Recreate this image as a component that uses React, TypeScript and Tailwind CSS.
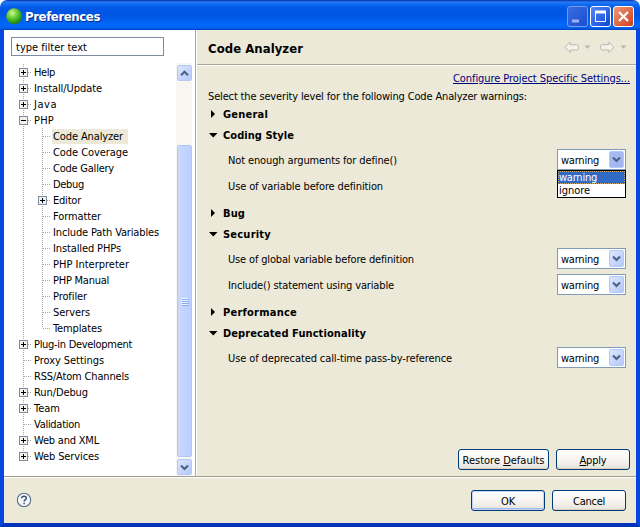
import React, { useLayoutEffect, useRef, useState } from 'react';

const FONT = "font-['DejaVu_Sans_Condensed','DejaVu_Sans',sans-serif] [font-stretch:condensed]";

/** A text label whose tracking is adjusted so that it fills the given width. */
function Label({ text, w, className = '', children }: { text: string; w: number; className?: string; children?: React.ReactNode }) {
  const ref = useRef<HTMLSpanElement>(null);
  const [spacing, setSpacing] = useState(0);
  useLayoutEffect(() => {
    if (ref.current) setSpacing((w - ref.current.getBoundingClientRect().width) / text.length);
  }, [text, w]);
  return (
    <span ref={ref} className={`inline-block shrink-0 whitespace-pre ${className}`} style={{ letterSpacing: spacing }}>
      {children ?? text}
    </span>
  );
}

type Node = { t: string; w: number; child?: boolean; box?: '+' | '-'; selected?: boolean };
const tree: Node[] = [
  { t: 'Help', w: 21, box: '+' },
  { t: 'Install/Update', w: 68, box: '+' },
  { t: 'Java', w: 23, box: '+' },
  { t: 'PHP', w: 20, box: '-' },
  { t: 'Code Analyzer', w: 70, child: true, selected: true },
  { t: 'Code Coverage', w: 75, child: true },
  { t: 'Code Gallery', w: 61, child: true },
  { t: 'Debug', w: 31, child: true },
  { t: 'Editor', w: 28, child: true, box: '+' },
  { t: 'Formatter', w: 48, child: true },
  { t: 'Include Path Variables', w: 106, child: true },
  { t: 'Installed PHPs', w: 68, child: true },
  { t: 'PHP Interpreter', w: 76, child: true },
  { t: 'PHP Manual', w: 56, child: true },
  { t: 'Profiler', w: 34, child: true },
  { t: 'Servers', w: 37, child: true },
  { t: 'Templates', w: 49, child: true },
  { t: 'Plug-in Development', w: 98, box: '+' },
  { t: 'Proxy Settings', w: 70 },
  { t: 'RSS/Atom Channels', w: 95 },
  { t: 'Run/Debug', w: 54, box: '+' },
  { t: 'Team', w: 26, box: '+' },
  { t: 'Validation', w: 46 },
  { t: 'Web and XML', w: 65, box: '+' },
  { t: 'Web Services', w: 65, box: '+' },
];

function Branch({ box, last, through }: { box?: '+' | '-'; last?: boolean; through?: boolean }) {
  return (
    <svg width="19" height="16" className="shrink-0" shapeRendering="crispEdges">
      <path d={`M4.5 0V${last ? 8 : 16}`} stroke="#a5a5a5" strokeDasharray="1 1" />
      {!through && <path d="M5 8.5H13" stroke="#a5a5a5" strokeDasharray="1 1" />}
      {box && (
        <>
          <rect x="0.5" y="4.5" width="8" height="8" fill="#f3f1ec" stroke="#7b8da3" />
          <path d="M2 8.5H7" stroke="#000" />
          {box === '+' && <path d="M4.5 6V11" stroke="#000" />}
        </>
      )}
    </svg>
  );
}

function TreeRow({ n, last, lastChild }: { n: Node; last: boolean; lastChild: boolean }) {
  return (
    <div className="flex h-4 items-center pl-[15px]">
      {n.child && <Branch through />}
      <Branch box={n.box} last={last || lastChild} />
      <div className={`-ml-[5px] flex h-[15px] items-center pl-px pr-[5px] ${n.selected ? 'bg-[#ece9d8]' : ''}`}>
        <Label text={n.t} w={n.w} />
      </div>
    </div>
  );
}

function Chevron({ up }: { up?: boolean }) {
  return (
    <svg width="9" height="7" viewBox="0 0 9 7">
      <path d={up ? 'M1 5.3L4.5 1.8L8 5.3' : 'M1 1.5L4.5 5L8 1.5'} fill="none" stroke="#4d6185" strokeWidth="2.1" />
    </svg>
  );
}

const blueBtn = 'flex items-center justify-center rounded-[2px] border border-[#b4c8f6] bg-linear-to-br from-[#dce6ff] to-[#b5c8f8]';

function Combo({ active }: { active?: boolean }) {
  return (
    <div className="flex h-[21px] w-[69px] items-center justify-between border border-[#7f9db9] bg-white pl-[3px] pr-px">
      <Label text="warning" w={38} className="mt-px" />
      <div className={`flex h-[17px] w-[15px] items-center justify-center rounded-[2px] border border-[#b4c8f6] bg-linear-to-br ${active ? 'from-[#a9bdf4] to-[#9fb3ef]' : 'from-[#dce6ff] to-[#b5c8f8]'}`}>
        <Chevron />
      </div>
    </div>
  );
}

function Section({ t, w, rows }: { t: string; w: number; rows?: { t: string; w: number; open?: boolean; bare?: boolean }[] }) {
  return (
    <div className="mb-px">
      <div className="flex h-5 items-center">
        <svg width="15" height="10" className="shrink-0">
          {rows ? <path d="M1 3H9.5L5.25 7.4Z" /> : <path d="M3 1V9L7 5Z" />}
        </svg>
        <Label text={t} w={w} className="font-bold" />
      </div>
      {rows && (
        <div className="pt-[2px] pb-[3px]">
          {rows.map((r) => (
            <div key={r.t} className="flex h-[26px] items-center justify-between pl-5 pr-[5px]">
              <Label text={r.t} w={r.w} />
              {!r.bare && (
                <div className="relative mb-px">
                  <Combo active={r.open} />
                  {r.open && (
                    <div className="absolute left-0 top-[21px] z-10 w-[69px] border border-black bg-white">
                      <div className="flex h-[13px] items-center bg-[#316ac5] pl-px text-white outline-1 -outline-offset-1 outline-dotted outline-[#c9a86a]">
                        <Label text="warning" w={38} />
                      </div>
                      <div className="flex h-[13px] items-center pl-px">
                        <Label text="ignore" w={31} />
                      </div>
                    </div>
                  )}
                </div>
              )}
            </div>
          ))}
        </div>
      )}
    </div>
  );
}

function Button({ t, w, primary, wide, children }: { t: string; w: number; primary?: boolean; wide?: boolean; children?: React.ReactNode }) {
  return (
    <button
      className={`flex h-[21px] items-center justify-center rounded-[3px] border border-[#003c74] bg-linear-to-b from-white via-[#f7f6f2] to-[#e6e3da] pt-px ${wide ? 'w-[91px]' : 'w-[74px]'} ${primary ? 'shadow-[inset_0_0_0_1px_#c3d4fb,inset_0_-2px_0_#a3b8ef]' : 'shadow-[inset_0_-1px_0_#d6d0c5]'}`}
    >
      <Label text={t} w={w}>{children}</Label>
    </button>
  );
}

function NavArrow({ right }: { right?: boolean }) {
  return (
    <svg width="27" height="14" className="shrink-0">
      <g transform={right ? 'translate(15 0) scale(-1 1)' : undefined}>
        <path d="M1 7.2L6.2 2V4.7H12.5Q14.4 4.7 14.4 6V8.7Q14.4 10 12.5 10H6.2V12.5Z" fill="#f4f2ea" stroke="#bbb9af" />
      </g>
      <path d="M20.5 5.5H26.5L23.5 8.8Z" fill="#bab7a8" />
    </svg>
  );
}

function TitleBar() {
  const btn = 'flex size-[21px] items-center justify-center rounded-[3px] border';
  return (
    <div className="flex h-[30px] shrink-0 items-center rounded-t-[7px] bg-[linear-gradient(180deg,#0831a8_0,#287cf1_7%,#1370f5_12%,#0359e8_25%,#0055e2_45%,#005dea_62%,#0268fa_82%,#0363f4_92%,#0044be_100%)] pl-[6px] pr-[6px]">
      <svg width="17" height="17" className="mt-[2px]">
        <defs>
          <radialGradient id="orb" cx=".38" cy=".3" r=".75">
            <stop offset="0" stopColor="#d8f6a0" />
            <stop offset=".35" stopColor="#78d340" />
            <stop offset=".7" stopColor="#36a61e" />
            <stop offset="1" stopColor="#1c7018" />
          </radialGradient>
        </defs>
        <circle cx="8.2" cy="8.3" r="8" fill="url(#orb)" />
      </svg>
      <Label text="Preferences" w={75} className="ml-[2px] mt-[3px] text-[13px] font-bold text-white [text-shadow:1px_1px_0_#0a2c8f]" />
      <div className="ml-auto mt-[3px] flex gap-[2px]">
        <div className={`${btn} border-[#7a9aef] bg-linear-to-br from-[#386ce2] to-[#194ed2]`}>
          <svg width="19" height="19"><path d="M4 14H11" stroke="#99b2f3" strokeWidth="3" /></svg>
        </div>
        <div className={`${btn} border-white bg-linear-to-br from-[#5486f4] to-[#0b47d5]`}>
          <svg width="19" height="19"><path d="M4.5 4V14.5H14.5V4" fill="none" stroke="white" /><path d="M4 5H15" stroke="white" strokeWidth="3" /></svg>
        </div>
        <div className={`${btn} border-white bg-linear-to-br from-[#f09777] to-[#cc3c13]`}>
          <svg width="19" height="19"><path d="M5 5L14 14M14 5L5 14" stroke="white" strokeWidth="2.2" /></svg>
        </div>
      </div>
    </div>
  );
}

export default function App() {
  return (
    <div className={`flex h-[527px] w-[640px] flex-col overflow-hidden bg-white text-[11px] leading-[13px] text-black ${FONT}`}>
      <TitleBar />
      <div className="flex h-[497px] flex-col border-x-4 border-b-4 border-x-[#0847df] border-b-[#0133b8] bg-[#ece9d8]">
        <div className="flex h-[447px] shrink-0 border-b border-[#9d9b8e]">
          <aside className="flex w-[192px] shrink-0 flex-col border-r border-[#aca899] bg-white">
            <div className="ml-[7px] mt-[7px] flex h-[19px] w-[153px] shrink-0 items-center border border-[#7f8ba4] pl-[4px] pt-px">
              <Label text="type filter text" w={71} />
            </div>
            <div className="mt-[7px] flex h-[413px]">
              <div className="flex w-[172px] flex-col pt-px">
                {tree.map((n, i) => (
                  <TreeRow key={n.t} n={n} last={i === tree.length - 1} lastChild={n.t === 'Templates'} />
                ))}
              </div>
              <div className="flex w-4 flex-col items-center bg-[#f7f6f1] pt-[2px]">
                <div className={`h-4 w-[15px] shrink-0 ${blueBtn}`}><Chevron up /></div>
                <div className="mt-[64px] flex h-[312px] w-[15px] shrink-0 flex-col items-center justify-center gap-px rounded-[2px] border border-[#b3c7f6] bg-linear-to-r from-[#c9d8fd] to-[#bcd0ff]">
                  {[0, 1, 2, 3].map((k) => <div key={k} className="h-px w-[7px] bg-[#eef4ff] shadow-[1px_1px_0_#8ca8e7]" />)}
                </div>
                <div className={`mt-[2px] h-4 w-[15px] shrink-0 ${blueBtn}`}><Chevron /></div>
              </div>
            </div>
          </aside>
          <main className="flex w-[440px] flex-col border-l border-white">
            <header className="flex h-[35px] shrink-0 items-center border-b border-[#aca899] pl-[11px] pr-[9px]">
              <Label text="Code Analyzer" w={95} className="mt-[2px] text-[13px] font-bold" />
              <div className="ml-auto flex gap-[9px]">
                <NavArrow />
                <NavArrow right />
              </div>
            </header>
            <div className="flex grow flex-col border-t border-white pl-[11px] pr-[5px]">
              <div className="mt-[5px] flex h-[14px] items-center justify-end pr-px">
                <a className="text-[#00007b]"><Label text="Configure Project Specific Settings..." w={177} className="underline" /></a>
              </div>
              <div className="mt-[4px] flex h-[14px] items-center">
                <Label text="Select the severity level for the following Code Analyzer warnings:" w={319} />
              </div>
              <div className="mt-px">
                <Section t="General" w={45} />
                <Section t="Coding Style" w={71} rows={[{ t: 'Not enough arguments for define()', w: 169, open: true }, { t: 'Use of variable before definition', w: 155, bare: true }]} />
                <Section t="Bug" w={22} />
                <Section t="Security" w={48} rows={[{ t: 'Use of global variable before definition', w: 186 }, { t: 'Include() statement using variable', w: 166 }]} />
                <Section t="Performance" w={74} />
                <Section t="Deprecated Functionality" w={143} rows={[{ t: 'Use of deprecated call-time pass-by-reference', w: 224 }]} />
              </div>
              <div className="mb-[6px] mt-auto flex justify-end gap-[7px] pr-px">
                <Button t="Restore Defaults" w={82} wide>Restore <u>D</u>efaults</Button>
                <Button t="Apply" w={27}><u>A</u>pply</Button>
              </div>
            </div>
          </main>
        </div>
        <footer className="flex grow items-center border-t border-white pl-[12px] pr-[10px]">
          <svg width="16" height="16" className="mb-px">
            <circle cx="8" cy="8" r="6.7" fill="#f6f7f8" stroke="#5b718c" strokeWidth="1.1" />
            <path d="M5.7 6.3Q5.8 4.3 8 4.3Q10.3 4.3 10.3 6.2Q10.3 7.2 9.1 8Q8.1 8.6 8.1 9.6M8.1 10.8V12.3" fill="none" stroke="#38536f" strokeWidth="1.5" />
          </svg>
          <div className="ml-auto flex gap-[7px]">
            <Button t="OK" w={14} primary />
            <Button t="Cancel" w={32} />
          </div>
        </footer>
      </div>
    </div>
  );
}
